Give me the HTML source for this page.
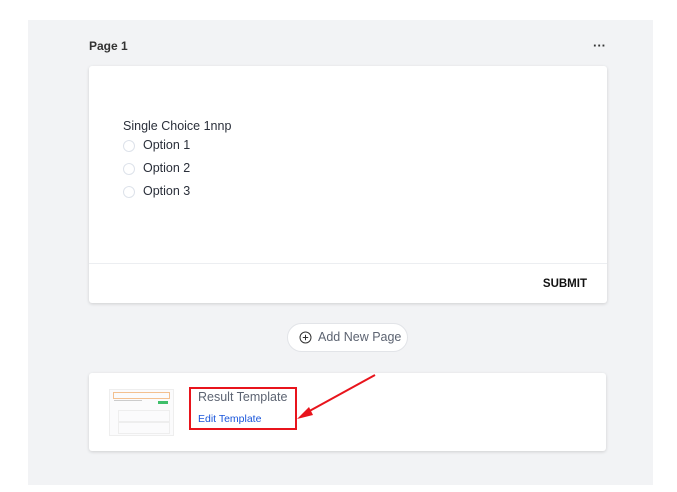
<!DOCTYPE html>
<html><head><style>
body{margin:0;width:677px;height:492px;background:#fff;font-family:"Liberation Sans",sans-serif;position:relative;overflow:hidden}
.bg{position:absolute;left:28px;top:20px;width:625px;height:465px;background:#f2f3f5}
.abs{position:absolute}
.card{position:absolute;background:#fff;border-radius:3px;box-shadow:0 1px 3px rgba(0,0,0,.15)}
.opt{position:absolute;left:123px;font-size:12.5px;color:#2a2f3a}
.opt i{position:absolute;left:0;top:2px;width:10px;height:10px;border:1px solid #dde2ea;border-radius:50%}
.opt span{position:absolute;left:20px;top:0;white-space:nowrap}
</style></head><body>
<div class="bg"></div>
<div class="abs" style="left:89px;top:39px;font-size:12px;font-weight:bold;color:#333">Page 1</div>
<div class="abs" style="left:593px;top:38px;font-size:13px;font-weight:bold;color:#333">···</div>
<div class="card" style="left:89px;top:66px;width:518px;height:237px">
  <div class="abs" style="left:0;top:197px;width:518px;height:1px;background:#eceef1"></div>
  <div class="abs" style="right:20px;top:212px;font-size:11.5px;font-weight:bold;color:#111">SUBMIT</div>
</div>
<div class="abs" style="left:123px;top:119px;font-size:12.5px;color:#2a2f3a">Single Choice 1nnp</div>
<div class="opt" style="top:138px"><i></i><span>Option 1</span></div>
<div class="opt" style="top:161px"><i></i><span>Option 2</span></div>
<div class="opt" style="top:184px"><i></i><span>Option 3</span></div>
<div class="abs" style="left:287px;top:323px;width:121px;height:29px;background:#fff;border:1px solid #e2e4e8;border-radius:15px;box-sizing:border-box">
  <svg class="abs" style="left:11px;top:7px" width="13" height="13" viewBox="0 0 13 13"><circle cx="6.5" cy="6.5" r="5.5" fill="none" stroke="#333" stroke-width="1"/><path d="M6.5 3.8v5.4M3.8 6.5h5.4" stroke="#333" stroke-width="1"/></svg>
  <div class="abs" style="left:30px;top:6px;font-size:12.5px;color:#5d6472;white-space:nowrap">Add New Page</div>
</div>
<div class="card" style="left:89px;top:373px;width:517px;height:78px"></div>
<div class="abs" style="left:109px;top:389px;width:63px;height:45px;background:#fbfbfc;border:1px solid #eee">
  <div class="abs" style="left:3px;top:2px;width:55px;height:5px;border:1px solid #f3c08f"></div>
  <div class="abs" style="left:4px;top:10px;width:28px;height:1px;background:#ccc"></div>
  <div class="abs" style="left:48px;top:11px;width:10px;height:3px;background:#3fbf6a"></div>
  <div class="abs" style="left:8px;top:20px;width:50px;height:10px;border:1px solid #eee"></div>
  <div class="abs" style="left:8px;top:32px;width:50px;height:10px;border:1px solid #eee"></div>
</div>
<div class="abs" style="left:189px;top:387px;width:108px;height:43px;border:2px solid #e8141c;box-sizing:border-box"></div>
<div class="abs" style="left:198px;top:390px;font-size:12.5px;color:#5d6472">Result Template</div>
<div class="abs" style="left:198px;top:413px;font-size:10.5px;color:#1a56db">Edit Template</div>
<svg class="abs" style="left:0;top:0" width="677" height="492"><path d="M375 375L304 414" stroke="#e8141c" stroke-width="2"/><path d="M297 419L309 407L313 415Z" fill="#e8141c"/></svg>
</body></html>
